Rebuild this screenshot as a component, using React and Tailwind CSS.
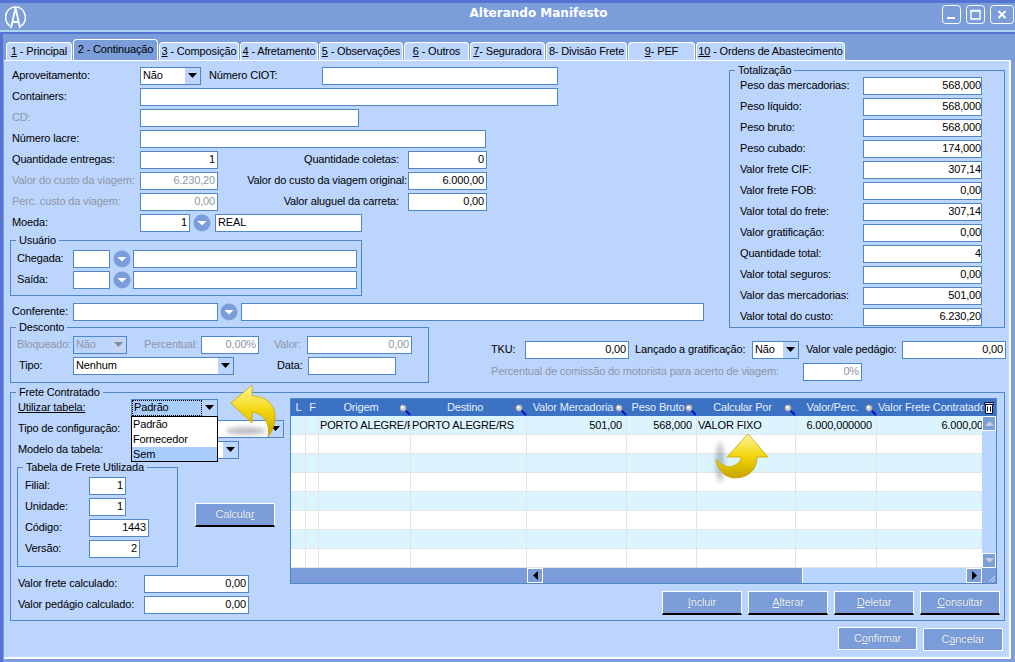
import React from "react";

const Txt = ({ children, className = "" }) => <span className={`whitespace-nowrap shrink-0 ${className}`}>{children}</span>;
const Off = ({ children, className = "" }) => <Txt className={`text-[#8d96a6] ${className}`}>{children}</Txt>;

const Inp = ({ className = "", v = "", left = false, off = false }) => (
  <div className={`h-[18px] shrink-0 bg-white border border-[#4f86c4] flex items-center px-[2px] overflow-hidden whitespace-nowrap leading-none ${left ? "justify-start" : "justify-end"} ${off ? "text-[#8d96a6] bg-[#d3e3fd]" : ""} ${className}`}>{v}</div>
);

const Tri = ({ off }) => (
  <svg width="9" height="5" viewBox="0 0 9 5"><path d="M0 0H9L4.5 5Z" fill={off ? "#7f8a9c" : "#000"} /></svg>
);

const Sel = ({ className = "", v = "", off = false, focus = false }) => (
  <div className={`h-[18px] shrink-0 border border-[#4f86c4] flex items-stretch overflow-hidden ${off ? "bg-[#bcd5fd] text-[#8d96a6]" : "bg-white"} ${focus ? "!bg-[#a9cdfd]" : ""} ${className}`}>
    <div className={`flex-1 flex items-center px-[2px] whitespace-nowrap ${focus ? "outline-1 outline-dotted outline-black -outline-offset-1" : ""}`}>{v}</div>
    <div className={`w-[15px] flex items-center justify-center ${off ? "bg-[#c5d6f5]" : "bg-[#bcd5fd]"}`}><Tri off={off} /></div>
  </div>
);

const Drop = ({ className = "" }) => (
  <svg className={`shrink-0 ${className}`} width="18" height="18" viewBox="0 0 18 18">
    <circle cx="9" cy="9" r="8.5" fill="#7b9edb" />
    <path d="M4.5 7H13.5L9 11.5Z" fill="#fff" />
  </svg>
);

const Row = ({ children, className = "" }) => <div className={`flex items-center h-[21px] ${className}`}>{children}</div>;

const Fs = ({ title, className = "", children }) => (
  <fieldset className={`border border-[#4f86c4] shrink-0 ${className}`}>
    <legend className="ml-[5px] px-[3px] h-[14px] leading-[14px]">{title}</legend>
    {children}
  </fieldset>
);

const Btn = ({ pre, u, post, className = "", line = true }) => (
  <div className={`shrink-0 bg-[#7b9edb] border border-white ${line ? "h-[24px] border-b-2 border-b-black" : "h-[23px]"} flex items-center justify-center text-[#eef4ff] [text-shadow:0_0_1px_#54698f] ${className}`}>
    <span>{pre}<u>{u}</u>{post}</span>
  </div>
);

const tabs = [
  ["1", " - Principal", "w-[66px]"],
  ["", "2 - Continuação", "w-[85px]"],
  ["3", " - Composição", "w-[80px]"],
  ["4", " - Afretamento", "w-[78px]"],
  ["5", " - Observações", "w-[84px]"],
  ["6", " - Outros", "w-[65px]"],
  ["7", "- Seguradora", "w-[75px]"],
  ["", "8- Divisão Frete", "w-[81px]"],
  ["9", "- PEF", "w-[67px]"],
  ["10", " - Ordens de Abastecimento", "w-[149px]"],
];

const Tabs = () => (
  <div className="flex items-end h-[27px] pl-[2px] gap-[1px]">
    {tabs.map(([u, t, w], i) => (
      <div key={i} className={`${w} shrink-0 border-t border-x border-white rounded-t-[4px] flex items-center justify-center whitespace-nowrap ${i === 1 ? "h-[21px] bg-[#7b9edb] pb-[1px]" : "h-[18px] bg-[#bcd5fd]"}`}>
        <span><u>{u}</u>{t}</span>
      </div>
    ))}
  </div>
);

const totals = [
  ["Peso das mercadorias:", "568,000"], ["Peso líquido:", "568,000"], ["Peso bruto:", "568,000"], ["Peso cubado:", "174,000"],
  ["Valor frete CIF:", "307,14"], ["Valor frete FOB:", "0,00"], ["Valor total do frete:", "307,14"], ["Valor gratificação:", "0,00"],
  ["Quantidade total:", "4"], ["Valor total seguros:", "0,00"], ["Valor das mercadorias:", "501,00"], ["Valor total do custo:", "6.230,20"],
];

const Mag = () => (
  <svg className="absolute right-0 top-[5px]" width="12" height="12" viewBox="0 0 12 12">
    <path d="M6 6L11 11" stroke="#0a14d0" strokeWidth="2" />
    <circle cx="4" cy="4" r="3.4" fill="#c9ced6" stroke="#6b7280" strokeWidth="0.8" />
    <circle cx="3.2" cy="3.2" r="1.2" fill="#fff" />
  </svg>
);

const heads = [
  ["L", false], ["F", false], ["Origem", true], ["Destino", true], ["Valor Mercadoria", true],
  ["Peso Bruto", true], ["Calcular Por", true], ["Valor/Perc.", true], ["Valor Frete Contratado", false],
];
const first = [
  ["", ""], ["", ""], ["PORTO ALEGRE/RS", "l"], ["PORTO ALEGRE/RS", "l"], ["501,00", "r"],
  ["568,000", "r"], ["VALOR FIXO", "l"], ["6.000,000000", "r"], ["6.000,00", "r"],
];
const cols = "grid grid-cols-[15px_13px_92px_116px_100px_70px_99px_81px_106px]";

const Grid = () => (
  <div className="w-[707px] h-[186px] border border-[#4f86c4] bg-[#7b9edb] flex flex-col shrink-0">
    <div className="flex h-[17px] bg-[#3b72c4] text-[#e6efff]">
      <div className={`${cols} w-[691px]`}>
        {heads.map(([t, m], i) => (
          <div key={i} className={`relative flex items-center overflow-hidden whitespace-nowrap ${i === 8 ? "justify-start pl-[1px]" : "justify-center"} ${m ? "pr-[8px]" : ""}`}>
            {t}{m && <Mag />}
          </div>
        ))}
      </div>
      <div className="flex-1 flex items-center justify-center">
        <svg width="10" height="13" viewBox="0 0 10 13" fill="none" stroke="#0b1030"><path d="M1.5 3.5H8.5V12.5H1.5Z" fill="#fff" /><path d="M.5 1.5H9.5V3.5H.5Z" fill="#c8d4f0" /><path d="M3.5 5.5V10.5M6.5 5.5V10.5" /></svg>
      </div>
    </div>
    <div className="flex h-[152px]">
      <div className="w-[691px]">
        {Array.from({ length: 8 }).map((_, r) => (
          <div key={r} className={`${cols} h-[19px] border-b border-[#e2e4e6] ${r % 2 === 0 ? "bg-[#dcf4fe]" : "bg-white"}`}>
            {first.map(([t, a], i) => (
              <div key={i} className={`flex items-center border-r border-[#e2e4e6] overflow-hidden whitespace-nowrap px-[1px] ${a === "r" ? "justify-end pr-[4px]" : "justify-start"} ${i === 8 ? "!pr-0 border-r-0" : ""}`}>
                {r === 0 ? t : ""}
              </div>
            ))}
          </div>
        ))}
      </div>
      <div className="flex-1 bg-[#b8d6fd] flex flex-col justify-between">
        <div className="h-[15px] bg-[#7b9edb] border border-white flex items-center justify-center"><svg width="9" height="5" viewBox="0 0 9 5"><path d="M0 5H9L4.5 0Z" fill="#c6cbd3" /></svg></div>
        <div className="h-[15px] bg-[#7b9edb] border border-white flex items-center justify-center"><svg width="9" height="5" viewBox="0 0 9 5"><path d="M0 0H9L4.5 5Z" fill="#c6cbd3" /></svg></div>
      </div>
    </div>
    <div className="flex h-[15px]">
      <div className="w-[236px] bg-[#7b9edb]" />
      <div className="w-[16px] bg-[#7b9edb] border border-white flex items-center justify-center"><svg width="5" height="9" viewBox="0 0 5 9"><path d="M5 0V9L0 4.5Z" /></svg></div>
      <div className="w-[260px] bg-[#7b9edb] border-r border-white" />
      <div className="w-[163px] bg-[#b8d6fd]" />
      <div className="w-[16px] bg-[#7b9edb] border border-white flex items-center justify-center"><svg width="5" height="9" viewBox="0 0 5 9"><path d="M0 0V9L5 4.5Z" /></svg></div>
      <div className="flex-1 bg-[#7b9edb] flex items-end justify-end"><svg width="10" height="10" viewBox="0 0 10 10"><path d="M9 3L3 9M9 6L6 9" stroke="#d6e2f8" /></svg></div>
    </div>
  </div>
);

const Arrows = () => (
  <>
    <svg className="absolute left-[225px] top-[383px]" width="56" height="60" viewBox="225 383 56 60">
      <defs>
        <linearGradient id="ya" x1="0" y1="0" x2="0" y2="1"><stop offset="0" stopColor="#fff6a0" /><stop offset="0.5" stopColor="#f2d60a" /><stop offset="1" stopColor="#c9a400" /></linearGradient>
        <filter id="bl" x="-50%" y="-50%" width="200%" height="200%"><feGaussianBlur stdDeviation="2.2" /></filter>
      </defs>
      <ellipse cx="246" cy="431" rx="20" ry="4" fill="#5d6470" opacity=".4" filter="url(#bl)" />
      <path d="M231 403L252 385V396C265 396 276 404 275 418C275 426 271 433 268 437C270 428 267 414 252 412V423Z" fill="url(#ya)" stroke="#c9a400" strokeWidth="0.8" />
    </svg>
    <svg className="absolute left-[708px] top-[430px]" width="66" height="60" viewBox="708 430 66 60">
      <defs>
        <linearGradient id="yb" x1="0" y1="0" x2="0" y2="1"><stop offset="0" stopColor="#fff6a0" /><stop offset="0.5" stopColor="#f2d60a" /><stop offset="1" stopColor="#c9a400" /></linearGradient>
        <filter id="bm" x="-100%" y="-50%" width="300%" height="200%"><feGaussianBlur stdDeviation="2.5" /></filter>
      </defs>
      <ellipse cx="720" cy="462" rx="4" ry="20" fill="#5d6470" opacity=".4" filter="url(#bm)" />
      <path d="M748 434L768 457H757C757 470 748 478 735 478C725 478 718 470 716 459C722 466 729 468 733 466C738 464 741 461 741 457H727Z" fill="url(#yb)" stroke="#c9a400" strokeWidth="0.8" />
    </svg>
  </>
);

export default function App() {
  return (
    <div className="relative w-[1015px] h-[662px] overflow-hidden bg-[#7b9edb] text-[11px] leading-none tracking-[-0.15px] text-black [font-family:'Liberation_Sans',sans-serif]">
      <div className="h-[30px] border-t-[3px] border-[#5573d2] flex items-center relative">
        <svg className="absolute left-[5px] top-[3px]" width="21" height="23" viewBox="0 0 21 23" fill="none" stroke="#fff">
          <path d="M5 20C1 17 0 13 .8 9 2 4 6 1 10.5 1S19 4 20 9C21 13 20 17 16 20" strokeWidth="1.6" />
          <path d="M10.5 2L6 22M10.5 2L15 22M8 16H13" strokeWidth="1.8" />
        </svg>
        <div className="flex-1 text-center text-white font-bold text-[12px] tracking-normal pl-[135px] pb-[8px] [font-family:'DejaVu_Sans',sans-serif]">Alterando Manifesto</div>
        <div className="flex gap-[5px] pr-[1px] pb-[4px]">
          <svg width="19" height="19" viewBox="0 0 19 19" fill="none" stroke="#fff"><rect x=".5" y=".5" width="18" height="18" rx="3" /><path d="M5 13H13" strokeWidth="2" /></svg>
          <svg width="19" height="19" viewBox="0 0 19 19" fill="none" stroke="#fff"><rect x=".5" y=".5" width="18" height="18" rx="3" /><path d="M5 5.5H14V14H5Z M5 6H14" strokeWidth="1.4" /></svg>
          <svg width="24" height="19" viewBox="0 0 24 19" fill="none" stroke="#fff"><rect x=".5" y=".5" width="23" height="18" rx="3" /><path d="M8.5 6L15.5 13M15.5 6L8.5 13" strokeWidth="2" /></svg>
        </div>
      </div>
      <div className="h-[4px] border-t-2 border-t-[#a9d7f0] border-b-2 border-b-[#5573d2]" />
      <div className="border-l-[3px] border-[#5573d2] h-[628px] pl-[1px] flex flex-col">
        <div className="-mt-[1px]"><Tabs /></div>
        <div className="w-[1007px] h-[599px] bg-[#bcd5fd] border-t border-r-2 border-b-2 border-white flex flex-col">
          <div className="flex h-[259px]">
            <div className="w-[725px] pl-[8px] pt-[4px] shrink-0 flex flex-col">
              <Row><Txt className="w-[128px]">Aproveitamento:</Txt><Sel className="w-[61px]" v="Não" /><Txt className="ml-[8px] w-[113px]">Número CIOT:</Txt><Inp className="w-[236px]" /></Row>
              <Row><Txt className="w-[128px]">Containers:</Txt><Inp className="w-[418px]" /></Row>
              <Row><Off className="w-[128px]">CD:</Off><Inp className="w-[219px]" /></Row>
              <Row><Txt className="w-[128px]">Número lacre:</Txt><Inp className="w-[346px]" /></Row>
              <Row><Txt className="w-[128px]">Quantidade entregas:</Txt><Inp className="w-[78px]" v="1" /><Txt className="w-[182px] text-right pr-[1px]">Quantidade coletas:</Txt><Inp className="w-[79px] ml-[8px]" v="0" /></Row>
              <Row><Off className="w-[128px]">Valor do custo da viagem:</Off><Inp className="w-[78px]" v="6.230,20" off /><Txt className="w-[189px] text-right">Valor do custo da viagem original:</Txt><Inp className="w-[79px] ml-[1px]" v="6.000,00" /></Row>
              <Row><Off className="w-[128px]">Perc. custo da viagem:</Off><Inp className="w-[78px]" v="0,00" off /><Txt className="w-[182px] text-right pr-[1px]">Valor aluguel da carreta:</Txt><Inp className="w-[79px] ml-[8px]" v="0,00" /></Row>
              <Row><Txt className="w-[128px]">Moeda:</Txt><Inp className="w-[50px]" v="1" /><Drop className="ml-[3px]" /><Inp className="w-[147px] ml-[4px]" v="REAL" left /></Row>
              <Fs title="Usuário" className="w-[352px] h-[63px] ml-[-2px]">
                <div className="pt-[1px]">
                  <Row><Txt className="w-[62px] pl-[6px]">Chegada:</Txt><Inp className="w-[37px]" /><Drop className="ml-[3px]" /><Inp className="w-[224px] ml-[2px]" /></Row>
                  <Row><Txt className="w-[62px] pl-[6px]">Saída:</Txt><Inp className="w-[37px]" /><Drop className="ml-[3px]" /><Inp className="w-[224px] ml-[2px]" /></Row>
                </div>
              </Fs>
              <Row className="mt-[7px] !h-[17px]"><Txt className="w-[61px]">Conferente:</Txt><Inp className="w-[145px]" /><Drop className="ml-[2px]" /><Inp className="w-[463px] ml-[3px]" /></Row>
            </div>
            <Fs title="Totalização" className="w-[276px] h-[265px] mt-[2px] self-start">
              <div className="-mt-[2px]">
                {totals.map(([l, v]) => (
                  <Row key={l} className="pl-[10px]"><Txt className="w-[123px]">{l}</Txt><Inp className="w-[119px] !pr-0" v={v} /></Row>
                ))}
              </div>
            </Fs>
          </div>

          <div className="flex h-[65px]">
            <Fs title="Desconto" className="w-[419px] h-[63px] ml-[6px]">
              <Row><Off className="w-[62px] pl-[6px]">Bloqueado:</Off><Sel className="w-[54px]" v="Não" off /><Off className="w-[74px] text-right pr-[3px]">Percentual:</Off><Inp className="w-[58px]" v="0,00%" off /><Off className="w-[37px] pl-[15px]">Valor:</Off><Inp className="w-[105px] ml-[11px]" v="0,00" off /></Row>
              <Row><Txt className="w-[62px] pl-[8px]">Tipo:</Txt><Sel className="w-[161px]" v="Nenhum" /><Txt className="w-[43px] pl-[43px]">Data:</Txt><Inp className="w-[88px] ml-[31px]" /></Row>
            </Fs>
            <div className="ml-[62px] pt-[19px] flex flex-col gap-[1px]">
              <Row><Txt className="w-[34px]">TKU:</Txt><Inp className="w-[104px]" v="0,00" /><Txt className="ml-[6px] w-[117px]">Lançado a gratificação:</Txt><Sel className="w-[47px]" v="Não" /><Txt className="ml-[7px] w-[96px]">Valor vale pedágio:</Txt><Inp className="w-[104px]" v="0,00" /></Row>
              <Row><Off className="w-[312px]">Percentual de comissão do motorista para acerto de viagem:</Off><Inp className="w-[59px]" v="0%" off /></Row>
            </div>
          </div>

          <Fs title="Frete Contratado" className="w-[995px] h-[236px] ml-[6px]">
            <div className="flex">
              <div className="w-[279px] -mt-[2px] shrink-0 pl-[7px]">
                <Row><Txt className="w-[113px] underline">Utilizar tabela:</Txt><Sel className="w-[87px]" v="Padrão" focus /></Row>
                <Row><Txt className="w-[113px]">Tipo de configuração:</Txt><Sel className="w-[153px]" v="" /></Row>
                <Row><Txt className="w-[113px]">Modelo da tabela:</Txt><Sel className="w-[108px]" v="" /></Row>
                <div className="flex">
                  <Fs title="Tabela de Frete Utilizada" className="w-[161px] h-[107px] -ml-[1px]">
                    <div className="pt-[1px]">
                      {[["Filial:", "1"], ["Unidade:", "1"], ["Código:", "1443"], ["Versão:", "2"]].map(([l, v]) => (
                        <Row key={l}><Txt className="w-[71px] pl-[7px]">{l}</Txt><Inp className={l === "Código:" ? "w-[60px]" : l === "Versão:" ? "w-[51px]" : "w-[37px]"} v={v} /></Row>
                      ))}
                    </div>
                  </Fs>
                  <Btn pre="Calcula" u="r" className="w-[80px] ml-[17px] mt-[43px]" />
                </div>
                <Row className="mt-[6px]"><Txt className="w-[126px]">Valor frete calculado:</Txt><Inp className="w-[105px]" v="0,00" /></Row>
                <Row><Txt className="w-[126px]">Valor pedágio calculado:</Txt><Inp className="w-[105px]" v="0,00" /></Row>
              </div>
              <div className="-mt-[1px] w-[712px]">
                <Grid />
                <div className="flex gap-[6px] pl-[372px] mt-[7px]">
                  <Btn u="I" post="ncluir" className="w-[80px]" />
                  <Btn u="A" post="lterar" className="w-[80px]" />
                  <Btn u="D" post="eletar" className="w-[80px]" />
                  <Btn u="C" post="onsultar" className="w-[80px]" />
                </div>
              </div>
            </div>
          </Fs>

          <div className="flex justify-end gap-[6px] pr-[6px] mt-[6px]">
            <Btn pre="C" u="o" post="nfirmar" className="w-[79px]" line={false} />
            <Btn pre="C" u="a" post="ncelar" className="w-[80px] mt-[1px]" line={false} />
          </div>
        </div>
      </div>

      <div className="absolute left-[131px] top-[416px] w-[87px] h-[46px] bg-white border border-black flex flex-col">
        <div className="h-[15px] flex items-center px-[1px]">Padrão</div>
        <div className="h-[15px] flex items-center px-[1px]">Fornecedor</div>
        <div className="h-[14px] flex items-center px-[1px] bg-[#a9cdfd]">Sem</div>
      </div>
      <Arrows />
    </div>
  );
}
